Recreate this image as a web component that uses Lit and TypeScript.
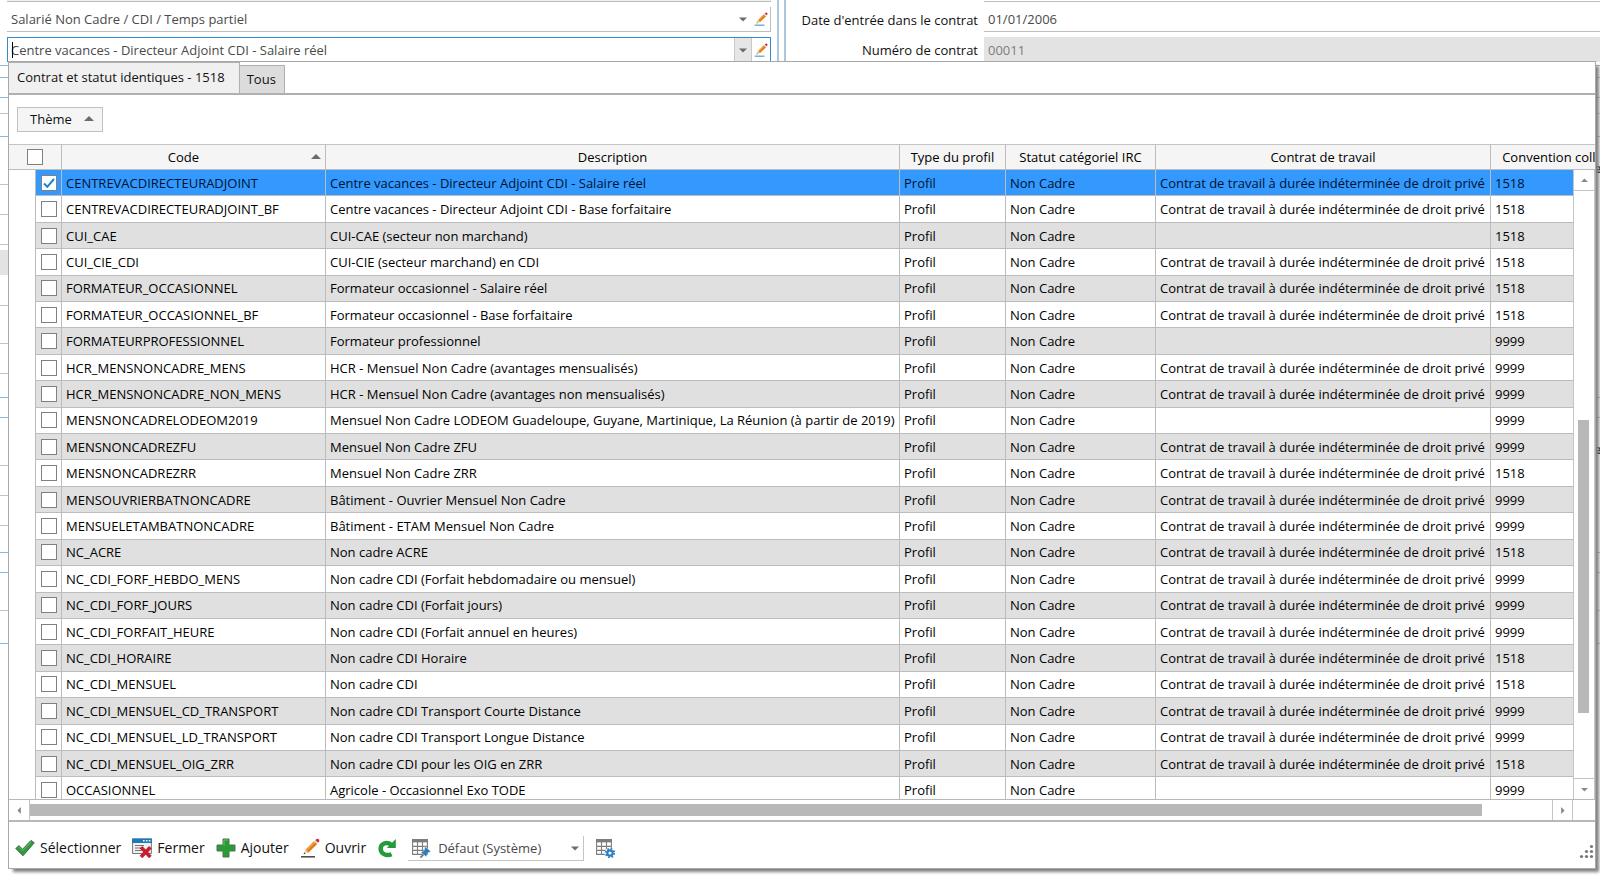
import { LitElement, html, css, svg } from "lit";
import { customElement, state } from "lit/decorators.js";
import { classMap } from "lit/directives/class-map.js";

interface Profil {
  code: string;
  description: string;
  contrat: boolean;
  convention: string;
}

const CDI = "Contrat de travail à durée indéterminée de droit privé";

const p = (code: string, description: string, contrat: boolean, convention: string): Profil => ({
  code,
  description,
  contrat,
  convention,
});

const PROFILS: Profil[] = [
  p("CENTREVACDIRECTEURADJOINT", "Centre vacances - Directeur Adjoint CDI - Salaire réel", true, "1518"),
  p("CENTREVACDIRECTEURADJOINT_BF", "Centre vacances - Directeur Adjoint CDI - Base forfaitaire", true, "1518"),
  p("CUI_CAE", "CUI-CAE (secteur non marchand)", false, "1518"),
  p("CUI_CIE_CDI", "CUI-CIE (secteur marchand) en CDI", true, "1518"),
  p("FORMATEUR_OCCASIONNEL", "Formateur occasionnel - Salaire réel", true, "1518"),
  p("FORMATEUR_OCCASIONNEL_BF", "Formateur occasionnel - Base forfaitaire", true, "1518"),
  p("FORMATEURPROFESSIONNEL", "Formateur professionnel", false, "9999"),
  p("HCR_MENSNONCADRE_MENS", "HCR - Mensuel Non Cadre (avantages mensualisés)", true, "9999"),
  p("HCR_MENSNONCADRE_NON_MENS", "HCR - Mensuel Non Cadre (avantages non mensualisés)", true, "9999"),
  p("MENSNONCADRELODEOM2019", "Mensuel Non Cadre LODEOM Guadeloupe, Guyane, Martinique, La Réunion (à partir de 2019)", false, "9999"),
  p("MENSNONCADREZFU", "Mensuel Non Cadre ZFU", true, "9999"),
  p("MENSNONCADREZRR", "Mensuel Non Cadre ZRR", true, "1518"),
  p("MENSOUVRIERBATNONCADRE", "Bâtiment - Ouvrier Mensuel Non Cadre", true, "9999"),
  p("MENSUELETAMBATNONCADRE", "Bâtiment - ETAM Mensuel Non Cadre", true, "9999"),
  p("NC_ACRE", "Non cadre ACRE", true, "1518"),
  p("NC_CDI_FORF_HEBDO_MENS", "Non cadre CDI (Forfait hebdomadaire ou mensuel)", true, "9999"),
  p("NC_CDI_FORF_JOURS", "Non cadre CDI (Forfait jours)", true, "9999"),
  p("NC_CDI_FORFAIT_HEURE", "Non cadre CDI (Forfait annuel en heures)", true, "9999"),
  p("NC_CDI_HORAIRE", "Non cadre CDI Horaire", true, "1518"),
  p("NC_CDI_MENSUEL", "Non cadre CDI", true, "1518"),
  p("NC_CDI_MENSUEL_CD_TRANSPORT", "Non cadre CDI Transport Courte Distance", true, "9999"),
  p("NC_CDI_MENSUEL_LD_TRANSPORT", "Non cadre CDI Transport Longue Distance", true, "9999"),
  p("NC_CDI_MENSUEL_OIG_ZRR", "Non cadre CDI pour les OIG en ZRR", true, "1518"),
  p("OCCASIONNEL", "Agricole - Occasionnel Exo TODE", false, "9999"),
];

/* Strips of the form that stay visible on both sides of the popup:
   height, colour of the left rule, colour of the right rule, extra. */
type Strip = [number, string, string, string?];
const STRIPS: Strip[] = [
  [4, "blue", "blue"],
  [12, "blue", "blue"],
  [20, "blue", "blue"],
  [16, "gray", "gray"],
  [23, "blue", "blue"],
  [48, "gray", "none", "text"],
  [30, "gray", "none"],
  [30, "gray", "none"],
  [30, "none", "none", "fill"],
  [31, "gray", "none"],
  [38, "gray", "none"],
  [30, "gray", "none"],
  [24, "blue", "blue"],
  [20, "blue", "blue"],
  [48, "gray", "none", "text"],
  [30, "gray", "none"],
  [30, "gray", "none"],
  [27, "blue", "blue"],
  [20, "blue", "blue"],
  [38, "gray", "gray"],
  [33, "blue", "blue"],
];

const pencil = (line: string) => svg`
  <svg viewBox="0 0 20 20" aria-hidden="true">
    <path d="M1 18.8H15" stroke=${line} stroke-width="1.5"/>
    <path d="M4.2 15.4 5.6 11.4 14 3 17 6 8.4 14.4Z" fill="#f29a35"/>
    <path d="M6.8 13.2 15.6 4.6 17 6 8.4 14.4Z" fill="#d97a1c"/>
    <path d="M5.6 11.4 3.6 16.4 8.4 14.4Z" fill="#f3d3a4"/>
    <path d="M4.3 14.6 3.6 16.4 5.4 15.6Z" fill="#333"/>
    <path d="M14 3 15.2 2 18 4.8 17 6Z" fill="#e3e3e3"/>
    <path d="M15.2 2 16.6.9Q17.8.3 18.8 1.3T19.1 3.6L18 4.8Z" fill="#d8283c"/>
  </svg>`;

const arrow = (dir: "up" | "down" | "left" | "right") => {
  const d = {
    up: "M0 7 5 2 10 7Z",
    down: "M0 3 5 8 10 3Z",
    left: "M7 0 2 5 7 10Z",
    right: "M3 0 8 5 3 10Z",
  }[dir];
  return svg`<svg class="arrow" viewBox="0 0 10 10" aria-hidden="true"><path d=${d} fill="currentColor"/></svg>`;
};

const gridShape = svg`
  <path d="M1 1H17V17H1Z" fill="#fff"/>
  <path d="M1 1H17V4.4H1Z" fill="#7d7d7d"/>
  <path d="M1.6 1.6V16.4H16.4V1.6ZM1.6 8.4H16.4M1.6 12.4H16.4M6.5 4V16.4M11.5 4V16.4" fill="none" stroke="#7d7d7d" stroke-width="1.1"/>`;

const icons = {
  check: svg`<svg viewBox="0 0 20 20" aria-hidden="true">
    <path d="M.8 10.6 3.8 7.6 7.6 11.2 16 2.4 19.3 4.8 8 17.8Z" fill="#2e9b3c" stroke="#4b6b50" stroke-width="1" stroke-linejoin="round"/>
    <path d="M3.8 9 7.6 12.8 16.4 3.8" fill="none" stroke="#5cc067" stroke-width="1"/></svg>`,
  close: svg`<svg viewBox="0 0 20 20" aria-hidden="true">
    <path d="M.6 1H19.4V15.5H.6Z" fill="#f1f1f1" stroke="#777" stroke-width="1"/>
    <path d="M0 .5H20V5H0Z" fill="#1f78b9"/>
    <path d="M11 2.7H12.6M13.9 2.7H15.5M16.8 2.7H18.4" stroke="#fff" stroke-width="1.4"/>
    <path d="M3 7.5H12M3 10H9.5M3 12.5H9.5" stroke="#777" stroke-width="1.2"/>
    <path d="M9 9.2 18.4 19M18.4 9.2 9 19" stroke="#c51f30" stroke-width="3.6"/></svg>`,
  add: svg`<svg viewBox="0 0 20 20" aria-hidden="true">
    <path d="M7 1H13V7H19V13H13V19H7V13H1V7H7Z" fill="#2a9b37" stroke="#4a7650" stroke-width="1" stroke-linejoin="round"/>
    <path d="M8 7.8V2H12" fill="none" stroke="#5fbf69" stroke-width="1"/></svg>`,
  refresh: svg`<svg viewBox="0 0 20 20" aria-hidden="true">
    <path d="M14.6 16.2C9 18.6 3.6 15.6 3.6 10.6S9.6 3.2 14 6.6" fill="none" stroke="#249a3a" stroke-width="4.4"/>
    <path d="M18.8 1V10H9.8Z" fill="#249a3a"/></svg>`,
  layout: svg`<svg viewBox="0 0 20 20" aria-hidden="true">${gridShape}
    <path d="M9.4 19.6 12.4 16.6" stroke="#777" stroke-width="1.8"/>
    <path d="M13.8 8.4 20 13.4 17 14.8 15.2 18.8 10 14.4 13.4 12.4Z" fill="#2b7fc0" stroke="#fff" stroke-width=".4"/></svg>`,
  settings: svg`<svg viewBox="0 0 20 20" aria-hidden="true">${gridShape}
    <circle cx="15" cy="15" r="5.4" fill="#fff"/>
    <circle cx="15" cy="15" r="4.3" fill="none" stroke="#2b7fc0" stroke-width="1.8" stroke-dasharray="1.7 1.68"/>
    <circle cx="15" cy="15" r="2.7" fill="none" stroke="#2b7fc0" stroke-width="2.2"/></svg>`,
};

@customElement("app-root")
export class AppRoot extends LitElement {
  @state() private checked = new Set<string>([PROFILS[0].code]);

  static styles = css`
    :host {
      display: block;
      position: relative;
      height: 100vh;
      overflow: hidden;
      background: #fff;
      color: #111;
      font: 13px/18px "Open Sans", "Noto Sans", sans-serif;
    }
    *, *::before, *::after { box-sizing: border-box; }
    button, input, select { font: inherit; color: inherit; margin: 0; border-radius: 0; }
    button { background: none; border: 0; padding: 0; }
    svg { display: block; flex: none; width: 20px; height: 20px; }
    .arrow { width: 8px; height: 8px; color: #6c6c6c; }

    /* form behind the popup */
    .form { display: grid; grid-template-columns: 771px 1fr; height: 62px; }
    .side { display: grid; grid-template-rows: 2px 25px 25px; row-gap: 5px; }
    .left { padding-left: 7px; }
    .right { margin-left: 6px; border-left: 2px solid #aac7de; padding-left: 5px; }
    .rule { border-bottom: 1px solid #bdbdbd; background: #efefef; }
    .rightbar { border-left: 2px solid #aac7de; }
    .combo { display: flex; align-items: center; border-right: 1px solid #bdbdbd; border-bottom: 1px solid #bdbdbd; position: relative; }
    .combo input, .line input { flex: 1; min-width: 0; border: 0; outline: 0; background: none; padding: 0 4px; height: 100%; color: #4a4a4a; }
    .combo button { width: 18px; height: 100%; display: grid; place-items: center; }
    .combo button svg:not(.arrow) { width: 14px; height: 14px; }
    .combo.focus { border: 1px solid #2f8bd3; border-bottom: 0; }
    .combo.focus input { padding-left: 3px; }
    .combo.focus .drop { background: #e6e6e6; border: solid #c9c9c9; border-width: 0 1px; }
    .caret { position: absolute; left: 4px; top: 4px; width: 1px; height: 16px; background: #000; }
    .line { display: grid; grid-template-columns: 192px 1fr; column-gap: 6px; align-items: center; }
    .line label { text-align: right; }
    .line input { border-bottom: 1px solid #bdbdbd; }
    .line input:disabled { background: #e3e3e3; color: #7d7d7d; border-bottom: 0; }
    .strip { display: flex; justify-content: space-between; align-items: flex-end; }
    .strip i { width: 8px; border-bottom: 1px solid transparent; height: 100%; }
    .strip .blue { border-color: #8fb8d6; }
    .strip .gray { border-color: #c4c4c4; }
    .strip .fill { background: #e3e3e3; height: 25px; }
    .strip b { width: 6px; overflow: hidden; white-space: nowrap; margin-bottom: 8px; }

    /* popup */
    .popup {
      position: absolute; inset: 61px 4px 6px 8px;
      display: grid; grid-template-columns: minmax(0, 1fr);
      grid-template-rows: 33px 49px minmax(0, 1fr) 22px 46px;
      background: #fff; border: 1px solid #a8a8a8;
      box-shadow: 4px 4px 3px -1px #808080;
    }
    .tabs { display: flex; align-items: flex-end; border-bottom: 2px solid #b0b0b0; }
    .tab { height: 28px; padding: 0 8px 2px 7px; background: #dcdcdc; border: 1px solid #b0b0b0; border-bottom: 0; border-left: 0; }
    .tab.on { height: 31px; padding: 0 14px 2px 8px; background: #f0f0f0; }
    .group { padding: 12px 8px; }
    .theme { display: flex; align-items: center; gap: 12px; height: 25px; padding: 0 8px 1px 12px; background: #f5f5f5; border: 1px solid #c0c0c0; }
    .theme .arrow, .sort .arrow { width: 10px; height: 10px; }

    .view { position: relative; overflow: hidden; border-top: 1px solid #c4c4c4; border-bottom: 1px solid #b8b8b8; }
    table { table-layout: fixed; width: calc(100% + 48px); height: calc(100% + 5px); border-spacing: 0; border-collapse: separate; }
    .c-ind { width: 27px; }
    .c-box { width: 26px; }
    .c-code { width: 264px; }
    .c-type { width: 106px; }
    .c-statut { width: 150px; }
    .c-contrat { width: 335px; }
    .c-conv { width: 152px; }
    th, td { padding: 0 4px; border-right: 1px solid #bcbcbc; border-bottom: 1px solid #bcbcbc; white-space: nowrap; overflow: hidden; text-align: left; font-weight: 400; color: #000; }
    td { height: 26px; }
    th { height: 25px; background: #f5f5f5; text-align: center; padding-bottom: 1px; }
    .sort div { display: grid; grid-template-columns: 1fr 10px; align-items: center; column-gap: 10px; }
    tbody tr:nth-child(odd) td { background: #e0e0e0; }
    tbody tr.sel td { background: #3399ff; color: #001230; }
    tbody tr td.ind { background: #fff; border-bottom: 0; }
    .boxcell { padding: 0; text-align: center; }
    input[type="checkbox"] { appearance: none; display: block; width: 16px; height: 16px; margin: 0 auto; border: 1px solid #808080; background: #fff center / 12px 12px no-repeat; }
    input[type="checkbox"]:checked { background-image: url("data:image/svg+xml,%3Csvg xmlns='http://www.w3.org/2000/svg' viewBox='0 0 12 12'%3E%3Cpath d='M1 6.5 4.3 9.8 11 2' fill='none' stroke='%231883d7' stroke-width='2'/%3E%3C/svg%3E"); }

    .vscroll { position: absolute; inset: 25px 0 0 auto; width: 22px; display: flex; flex-direction: column; background: #fff; border-left: 1px solid #c4c4c4; border-right: 1px solid #c4c4c4; }
    .vscroll button { height: 21px; display: grid; place-items: center; border: 0 solid #c4c4c4; border-bottom-width: 1px; }
    .vscroll button:last-child { border-width: 1px 0 0; }
    .vtrack { flex: 1; padding: 0 5px 0 4px; display: grid; grid-template-rows: 39% 50% 11%; }
    .thumb { background: #b8b8b8; grid-row: 2; }
    .vscroll .arrow, .hscroll .arrow { width: 7px; height: 7px; color: #8a8a8a; }
    .hscroll { display: grid; grid-template-columns: 21px 1fr 21px 22px; border-bottom: 2px solid #b8b8b8; }
    .hscroll button { display: grid; place-items: center; border: 0 solid #c4c4c4; border-right-width: 1px; }
    .hscroll button.next { border-width: 0 1px; }
    .htrack { padding: 4px 70px 4px 0; }
    .htrack .thumb { height: 100%; }

    .bar { display: flex; align-items: center; gap: 11px; padding: 6px 1px 0 6px; font-size: 14px; line-height: 20px; position: relative; }
    .bar button { display: flex; align-items: center; gap: 5px; }
    .picker { position: relative; display: flex; align-items: center; width: 176px; height: 25px; padding-left: 3px; border: solid #c4c4c4; border-width: 0 1px 1px 0; }
    .picker select { position: absolute; inset: 0; width: 100%; appearance: none; border: 0; background: none; outline: 0; padding: 0 20px 0 30px; font-size: 13px; color: #4a4a4a; }
    .picker .arrow { margin-left: auto; margin-right: 4px; }
    .grip { position: absolute; right: 1px; bottom: 9px; width: 15px; height: 15px; }
  `;

  private toggle(code: string) {
    const next = new Set(this.checked);
    next.has(code) ? next.delete(code) : next.add(code);
    this.checked = next;
  }

  private renderForm() {
    return html`
      <div class="form">
        <div class="side left">
          <div class="rule"></div>
          <div class="combo">
            <input aria-label="Statut du salarié" value="Salarié Non Cadre / CDI / Temps partiel" />
            <button aria-label="Dérouler">${arrow("down")}</button>
            <button aria-label="Modifier">${pencil("#3c8fc9")}</button>
          </div>
          <div class="combo focus">
            <span class="caret"></span>
            <input aria-label="Profil" value="Centre vacances - Directeur Adjoint CDI - Salaire réel" />
            <button class="drop" aria-label="Dérouler">${arrow("down")}</button>
            <button aria-label="Modifier">${pencil("#3c8fc9")}</button>
          </div>
        </div>
        <div class="right">
          <div class="side rightbar">
            <div class="line"><span></span><div class="rule"></div></div>
            <div class="line">
              <label for="entree">Date d'entrée dans le contrat</label>
              <input id="entree" value="01/01/2006" />
            </div>
            <div class="line">
              <label for="numero">Numéro de contrat</label>
              <input id="numero" value="00011" disabled />
            </div>
          </div>
        </div>
      </div>
      ${STRIPS.map(
        ([h, l, r, extra]) => html`<div class="strip" style="height:${h}px">
          <i class="${l} ${extra === "fill" ? "fill" : ""}"></i>
          ${extra === "text" ? html`<b>er</b>` : html`<i class=${r}></i>`}
        </div>`,
      )}
    `;
  }

  private renderTable() {
    return html`
      <table>
        <colgroup>
          <col class="c-ind" /><col class="c-box" /><col class="c-code" /><col />
          <col class="c-type" /><col class="c-statut" /><col class="c-contrat" /><col class="c-conv" />
        </colgroup>
        <thead>
          <tr>
            <th colspan="2" class="boxcell"><input type="checkbox" aria-label="Tout sélectionner" /></th>
            <th class="sort"><div>Code ${arrow("up")}</div></th>
            <th>Description</th>
            <th>Type du profil</th>
            <th>Statut catégoriel IRC</th>
            <th>Contrat de travail</th>
            <th>Convention collective</th>
          </tr>
        </thead>
        <tbody>
          ${PROFILS.map(
            (row, i) => html`<tr class=${classMap({ sel: i === 0 })}>
              <td class="ind"></td>
              <td class="boxcell">
                <input type="checkbox" aria-label=${row.code} .checked=${this.checked.has(row.code)}
                  @change=${() => this.toggle(row.code)} />
              </td>
              <td>${row.code}</td>
              <td>${row.description}</td>
              <td>Profil</td>
              <td>Non Cadre</td>
              <td>${row.contrat ? CDI : ""}</td>
              <td>${row.convention}</td>
            </tr>`,
          )}
        </tbody>
      </table>
    `;
  }

  render() {
    return html`
      ${this.renderForm()}
      <section class="popup">
        <div class="tabs" role="tablist">
          <button class="tab on" role="tab" aria-selected="true">Contrat et statut identiques - 1518</button>
          <button class="tab" role="tab" aria-selected="false">Tous</button>
        </div>
        <div class="group"><button class="theme">Thème ${arrow("up")}</button></div>
        <div class="view">
          ${this.renderTable()}
          <div class="vscroll">
            <button aria-label="Monter">${arrow("up")}</button>
            <div class="vtrack"><div class="thumb"></div></div>
            <button aria-label="Descendre">${arrow("down")}</button>
          </div>
        </div>
        <div class="hscroll">
          <button aria-label="Vers la gauche">${arrow("left")}</button>
          <div class="htrack"><div class="thumb"></div></div>
          <button class="next" aria-label="Vers la droite">${arrow("right")}</button>
        </div>
        <div class="bar">
          <button>${icons.check}Sélectionner</button>
          <button>${icons.close}Fermer</button>
          <button>${icons.add}Ajouter</button>
          <button>${pencil("#444")}Ouvrir</button>
          <button aria-label="Actualiser">${icons.refresh}</button>
          <div class="picker">
            ${icons.layout}${arrow("down")}
            <select aria-label="Disposition"><option>Défaut (Système)</option></select>
          </div>
          <button aria-label="Paramètres de la grille">${icons.settings}</button>
          <svg class="grip" viewBox="0 0 15 15" aria-hidden="true">
            <g fill="#777">
              <circle cx="12.5" cy="2.5" r="1.6" />
              <circle cx="7.5" cy="7.5" r="1.6" /><circle cx="12.5" cy="7.5" r="1.6" />
              <circle cx="2.5" cy="12.5" r="1.6" /><circle cx="7.5" cy="12.5" r="1.6" /><circle cx="12.5" cy="12.5" r="1.6" />
            </g>
          </svg>
        </div>
      </section>
    `;
  }
}
